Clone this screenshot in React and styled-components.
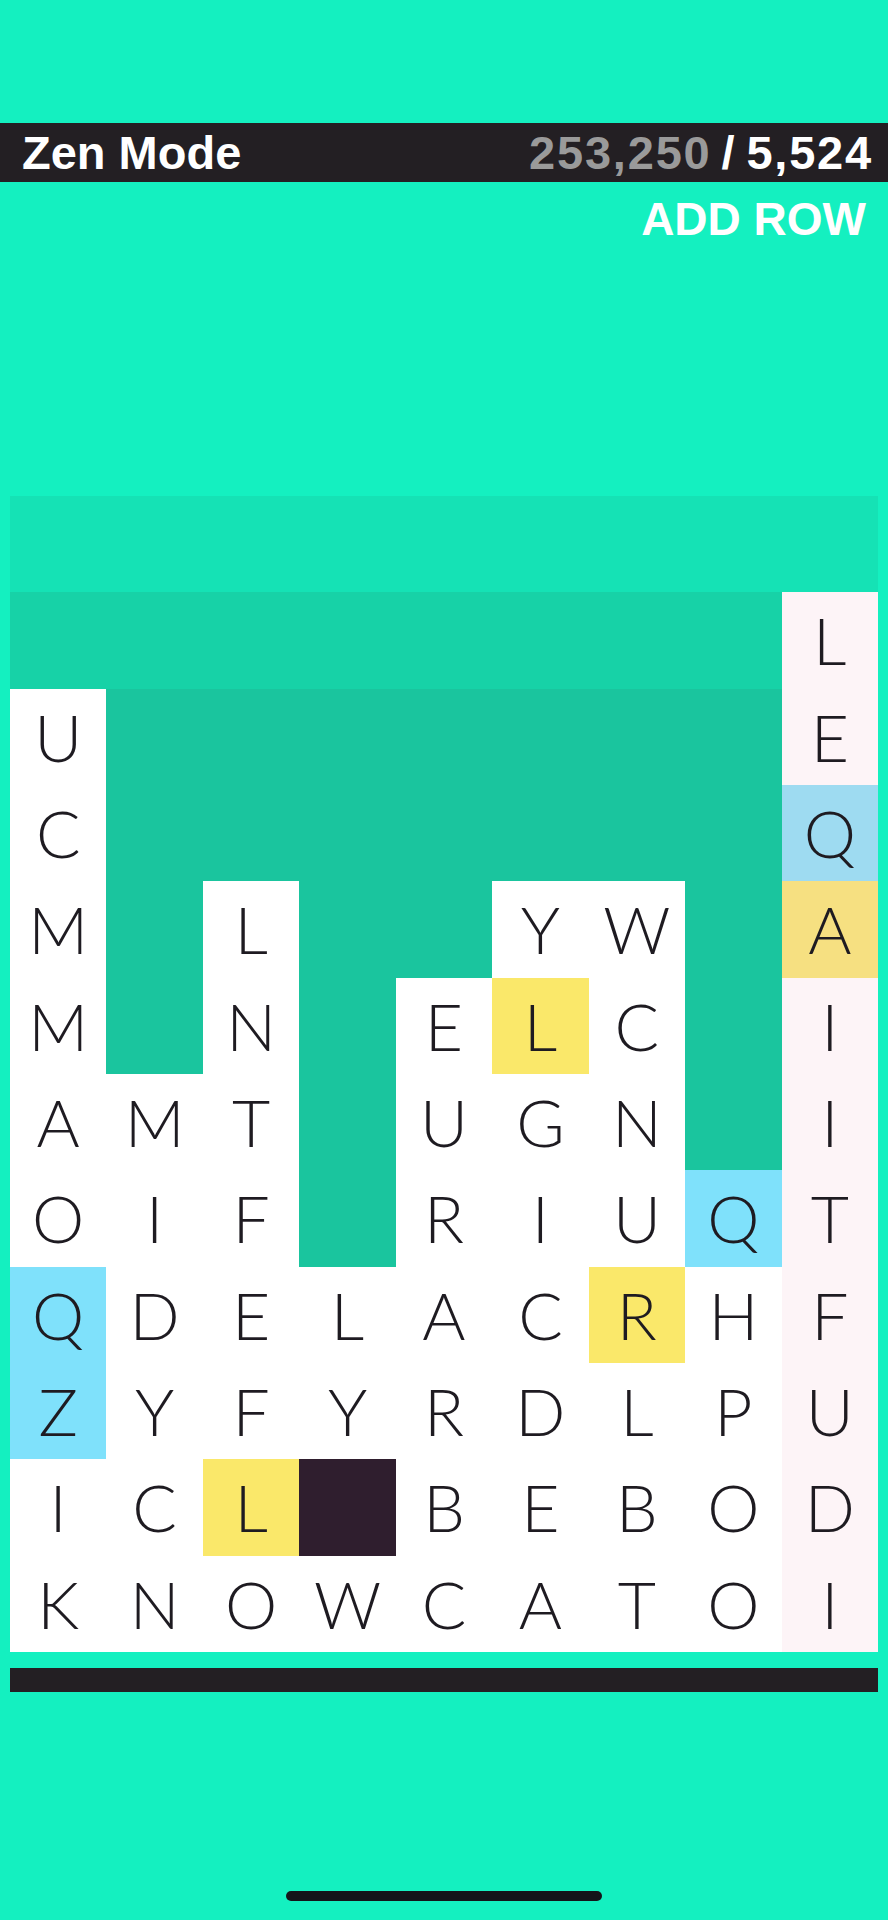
import styled, { createGlobalStyle } from 'styled-components';

const GlobalStyle = createGlobalStyle`
  html, body {
    margin: 0;
    padding: 0;
    background: #14f0c0;
  }
  * { box-sizing: border-box; }
`;

const ROWS = [
  '.........',
  '........L',
  'U.......E',
  'C.......Q',
  'M.L..YW.A',
  'M.N.ELC.I',
  'AMT.UGN.I',
  'OIF.RIUQT',
  'QDELACRHF',
  'ZYFYRDLPU',
  'ICL#BEBOD',
  'KNOWCATOI',
];

const SPECIAL = {
  '3,8': 'paleBlue',
  '4,8': 'paleYellow',
  '5,5': 'yellow',
  '7,7': 'blue',
  '8,0': 'blue',
  '8,6': 'yellow',
  '9,0': 'blue',
  '10,2': 'yellow',
  '10,3': 'dark',
};

const tones = {
  white: '#ffffff',
  pink: '#fdf4f7',
  blue: '#7fe1fb',
  paleBlue: '#9edbf1',
  yellow: '#fae86a',
  paleYellow: '#f6e081',
  dark: '#2f1e2e',
};

const Page = styled.div`
  min-height: 1920px;
  padding-top: 123px;
  background: #14f0c0;
  font-family: 'Liberation Sans', Arial, sans-serif;
`;

const TopBar = styled.div`
  height: 59px;
  background: #231f23;
  display: flex;
  align-items: center;
  justify-content: space-between;
  padding: 0 15px 0 22px;
  color: #ffffff;
  font-weight: 700;
  font-size: 47px;
  line-height: 47px;
`;

const Title = styled.span``;

const Score = styled.span`
  display: flex;
  align-items: baseline;
  gap: 10px;
  letter-spacing: 1.8px;
`;

const Best = styled.span`
  color: #9a9a9a;
`;

const Actions = styled.div`
  display: flex;
  justify-content: flex-end;
  padding: 0 22px;
  margin-top: 14px;
`;

const AddRow = styled.button`
  border: none;
  background: none;
  padding: 0;
  color: #ffffff;
  font-family: inherit;
  font-weight: 700;
  font-size: 46px;
  line-height: 46px;
  cursor: pointer;
`;

const Board = styled.div`
  margin: 254px 10px 0;
  display: grid;
  grid-template-columns: repeat(9, 1fr);
  grid-auto-rows: 96.33px;
  background: linear-gradient(
    to bottom,
    #15e2b5 0 96.33px,
    #17d2a7 96.33px 192.66px,
    #1ac59e 192.66px
  );
`;

const Tile = styled.div`
  display: flex;
  align-items: center;
  justify-content: center;
  background: ${({ $tone }) => ($tone ? tones[$tone] : 'transparent')};
  color: #1e1b21;
  font-family: 'Lato', 'Liberation Sans', sans-serif;
  font-weight: 300;
  font-size: 66px;
  line-height: 1;
`;

const Floor = styled.div`
  margin: 16px 10px 0;
  height: 24px;
  background: #231f23;
`;

const HomeIndicator = styled.div`
  width: 316px;
  height: 10px;
  border-radius: 5px;
  background: #141419;
  margin: 199px auto 0;
`;

const toneFor = (r, c, ch) => {
  if (ch === '.') return null;
  const key = `${r},${c}`;
  if (SPECIAL[key]) return SPECIAL[key];
  return c === 8 ? 'pink' : 'white';
};

const App = () => {
  return (
    <>
      <GlobalStyle />
      <Page>
        <TopBar>
          <Title>Zen Mode</Title>
          <Score>
            <Best>253,250</Best>
            <span>/</span>
            <span>5,524</span>
          </Score>
        </TopBar>
        <Actions>
          <AddRow>ADD ROW</AddRow>
        </Actions>
        <Board>
          {ROWS.map((row, r) =>
            row.split('').map((ch, c) => (
              <Tile key={`${r}-${c}`} $tone={toneFor(r, c, ch)}>
                {ch === '.' || ch === '#' ? '' : ch}
              </Tile>
            ))
          )}
        </Board>
        <Floor />
        <HomeIndicator />
      </Page>
    </>
  );
};

export default App;
